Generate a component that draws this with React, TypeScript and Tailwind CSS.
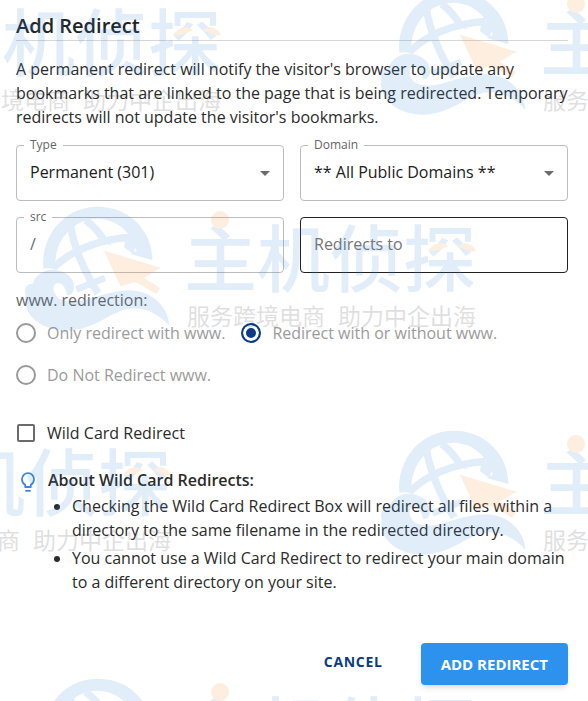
import React, { ReactNode, useId, useState } from 'react';
import { clsx } from 'clsx';

const STAMPS = [
  '-left-[255px] -top-[16px]',
  'left-[356px] -top-[16px]',
  'left-0 top-[200px]',
  '-left-[305px] top-[424px]',
  'left-[356px] top-[424px]',
  'left-0 top-[672px]',
];

const WWW_OPTIONS = [
  { value: 'only', label: 'Only redirect with www.' },
  { value: 'both', label: 'Redirect with or without www.' },
  { value: 'none', label: 'Do Not Redirect www.' },
];

function GlobeMark() {
  return (
    <svg x="0" y="0" width="180" height="134" viewBox="0 0 540 402">
      <path
        fill="#3d8bdc"
        d="M130 206C122 105 195 20 293 20C388 20 457 92 457 180L392 162L410 152C396 98 350 56 293 56C222 56 168 115 166 188L164 208C150 204 140 204 130 206Z"
      />
      <g fill="none" stroke="#3d8bdc" strokeWidth="22">
        <path d="M211 72C218 125 245 200 294 280" />
        <path d="M257 60C276 74 300 98 317 130" />
        <path d="M160 204C210 155 285 120 388 112" />
        <path d="M229 268L315 234" strokeWidth="20" />
      </g>
      <path fill="#3d8bdc" d="M296 112L339 137L306 128ZM378 102L414 122L400 162L372 142Z" />
      <path fill="#f29430" d="M312 152L482 203L431 233L480 264L469 281L407 246L361 259Z" />
      <path
        fill="#3d8bdc"
        d="M77 284C70 262 84 251 98 252C108 220 140 207 165 210C200 213 224 237 222 263C221 276 214 286 201 286C198 262 186 248 170 249C154 254 158 284 180 298C240 324 300 272 392 271C462 275 506 325 508 377C476 342 433 318 384 326C326 338 286 388 204 392C132 393 76 352 75 300Z"
      />
    </svg>
  );
}

function Stamp({ className }: { className: string }) {
  return (
    <svg className={clsx('absolute opacity-15', className)} width="490" height="140" viewBox="0 0 490 140">
      <GlobeMark />
      <g className="font-['Noto_Sans_CJK_SC',sans-serif]">
        <text x="184" y="86" fill="#3d8bdc" className="text-[73px] font-medium">
          主机侦探
        </text>
        <text x="187" y="125" fill="#333333" className="text-[23px] font-normal">
          服务跨境电商
        </text>
        <text x="338" y="125" fill="#333333" className="text-[23px] font-normal">
          助力中企出海
        </text>
      </g>
      <circle cx="220" cy="20" r="9" fill="#f29430" />
      <path fill="#f29430" d="M428 51C434 42 445 41 448 47C442 47 437 53 428 51ZM458 47C461 41 472 42 476 51C468 53 464 47 458 47Z" />
    </svg>
  );
}

function Watermark() {
  return (
    <div aria-hidden="true" className="pointer-events-none absolute inset-0 overflow-hidden">
      {STAMPS.map((pos) => (
        <Stamp key={pos} className={pos} />
      ))}
    </div>
  );
}

function Outlined({ id, label, children }: { id: string; label: string; children: ReactNode }) {
  return (
    <div className="relative">
      {children}
      <label htmlFor={id} className="absolute -top-2 left-2 bg-white px-1.5 text-xs leading-4 text-[#666666]">
        {label}
      </label>
    </div>
  );
}

function SelectField({ label, options }: { label: string; options: string[] }) {
  const id = useId();
  return (
    <Outlined id={id} label={label}>
      <select
        id={id}
        className="h-14 w-full appearance-none rounded border border-[#bcbcbc] bg-white pr-8 pb-0.5 pl-[13px] text-base text-[#212121]"
      >
        {options.map((option) => (
          <option key={option}>{option}</option>
        ))}
      </select>
      <svg
        className="pointer-events-none absolute inset-y-0 right-3.5 my-auto h-[5px] w-2.5 fill-[#6b6b6b]"
        viewBox="0 0 10 5"
      >
        <path d="M0 0h10L5 5z" />
      </svg>
    </Outlined>
  );
}

function BulbIcon() {
  return (
    <svg className="mt-0.5 h-6 w-6 shrink-0" viewBox="0 0 24 24" fill="none" stroke="#3b86e0" strokeWidth="1.800">
      <path d="M9.200 17v-2.200C7.200 13.700 6 11.900 6 9.200a6 6 0 0 1 12 0c0 2.700-1.200 4.500-3.200 5.600V17z" strokeLinejoin="round" />
      <path d="M9.300 20.800h5.400" />
    </svg>
  );
}

export default function App() {
  const [www, setWww] = useState('both');
  const [wildCard, setWildCard] = useState(false);
  const srcId = useId();

  return (
    <main className="relative min-h-screen bg-white pt-3 pr-5 pb-4 pl-4 font-['Open_Sans',sans-serif] text-base text-[#2b2b2b]">
      <form onSubmit={(e) => e.preventDefault()}>
        <h1 className="border-b border-[#d6d6d6] text-xl leading-7 font-semibold text-[#212529]">Add Redirect</h1>
        <p className="mt-4">
          A permanent redirect will notify the visitor's browser to update any bookmarks that are linked to the page
          that is being redirected. Temporary redirects will not update the visitor's bookmarks.
        </p>

        <div className="mt-4 grid grid-cols-2 gap-4">
          <SelectField label="Type" options={['Permanent (301)', 'Temporary (302)']} />
          <SelectField label="Domain" options={['** All Public Domains **']} />
          <Outlined id={srcId} label="src">
            <input
              id={srcId}
              type="text"
              defaultValue="/"
              className="h-14 w-full rounded border border-[#bcbcbc] bg-white px-[13px] pb-0.5 text-[#6b6b6b]"
            />
          </Outlined>
          <input
            type="text"
            aria-label="Redirects to"
            placeholder="Redirects to"
            className="h-14 w-full rounded border border-[#212121] bg-white px-[13px] pb-0.5 placeholder:text-[#757575]"
          />
        </div>

        <fieldset className="mt-[15px]">
          <legend className="text-[#666666]">www. redirection:</legend>
          <div className="flex flex-wrap gap-x-4">
            {WWW_OPTIONS.map((option) => (
              <label key={option.value} className="flex h-[42px] items-center gap-[11px] text-[#9b9b9b]">
                <input
                  type="radio"
                  name="www"
                  value={option.value}
                  checked={www === option.value}
                  onChange={() => setWww(option.value)}
                  className="h-5 w-5 shrink-0 appearance-none rounded-full border-2 border-[#999999] checked:border-[#0b3b82] checked:bg-[#0b3b82] checked:shadow-[inset_0_0_0_3px_#ffffff]"
                />
                {option.label}
              </label>
            ))}
          </div>
        </fieldset>

        <label className="mt-4 flex h-[42px] w-fit items-center gap-3 pl-px">
          <input
            type="checkbox"
            checked={wildCard}
            onChange={(e) => setWildCard(e.target.checked)}
            className="h-[18px] w-[18px] shrink-0 appearance-none rounded-xs border-2 border-[#6b6b6b] checked:border-[#0b3b82] checked:bg-[#0b3b82]"
          />
          Wild Card Redirect
        </label>

        <section className="mt-3.5 flex gap-2">
          <BulbIcon />
          <div>
            <h2 className="font-semibold">About Wild Card Redirects:</h2>
            <ul className="mt-0.5 list-disc space-y-1 pl-6">
              <li>
                Checking the Wild Card Redirect Box will redirect all files within a directory to the same filename in
                the redirected directory.
              </li>
              <li>You cannot use a Wild Card Redirect to redirect your main domain to a different directory on your site.</li>
            </ul>
          </div>
        </section>

        <div className="mt-[49px] flex items-center justify-end gap-7">
          <button type="button" className="px-2.5 pb-1 text-sm font-bold tracking-wider text-[#0b3b82]">
            CANCEL
          </button>
          <button
            type="submit"
            className="h-[42px] rounded bg-[#2d92ee] px-5 text-[15px] font-bold text-white shadow-md"
          >
            ADD REDIRECT
          </button>
        </div>
      </form>
      <Watermark />
    </main>
  );
}
